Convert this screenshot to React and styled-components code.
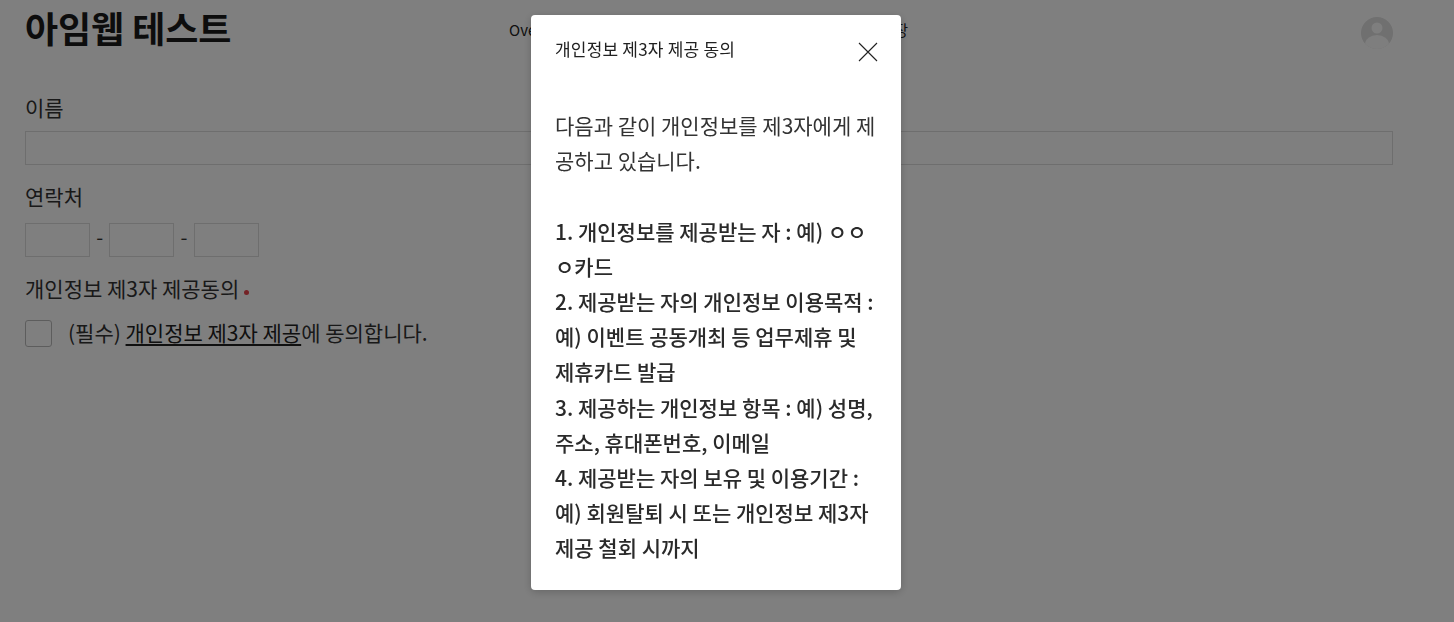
import React from "react"
import styled, { createGlobalStyle } from "styled-components"

const GlobalStyle = createGlobalStyle`
    html, body {
        margin: 0;
        padding: 0;
        height: 100%;
        background: #fff;
        overflow: hidden;
        font-family: "Noto Sans CJK KR", "Noto Sans", sans-serif;
        color: #212121;
    }
`

const Page = styled.div`
    padding: 0 61px 0 25px;
`

const Header = styled.header`
    height: 62px;
    display: grid;
    grid-template-columns: 484px 1fr 32px;
    align-items: start;
`

const Title = styled.h1`
    margin: 3px 0 0;
    font-size: 36px;
    line-height: 48px;
    font-weight: 700;
    letter-spacing: -0.1px;
    color: #1a1a1a;
`

const Nav = styled.nav`
    display: flex;
    justify-content: space-between;
    width: 399px;
    margin-top: 19px;
    font-size: 15px;
    line-height: 22px;
    color: #212121;
`

const Avatar = styled.div`
    width: 32px;
    height: 32px;
    margin-top: 17px;
`

const Form = styled.form`
    display: flex;
    flex-direction: column;
`

const Label = styled.label`
    display: block;
    font-size: 21px;
    line-height: 30px;
    color: #333;
    margin-top: ${(p) => p.$top}px;
    margin-bottom: ${(p) => p.$bottom}px;
`

const Required = styled.span`
    display: inline-block;
    width: 5px;
    height: 5px;
    margin-left: 5px;
    border-radius: 50%;
    background: #e8444c;
    vertical-align: 2px;
`

const NameInput = styled.input`
    box-sizing: border-box;
    display: block;
    width: 100%;
    height: 34px;
    padding: 0 8px;
    border: 1px solid #ddd;
    background: #fff;
`

const PhoneRow = styled.div`
    display: flex;
    align-items: center;
    height: 34px;
`

const PhoneInput = styled.input`
    box-sizing: border-box;
    width: 65px;
    height: 34px;
    padding: 0 8px;
    border: 1px solid #ddd;
    background: #fff;
`

const Dash = styled.span`
    width: 19.4px;
    margin-top: -8px;
    text-align: center;
    font-size: 20px;
    color: #333;
`

const AgreeRow = styled.div`
    display: flex;
    align-items: center;
    margin-top: 16px;
`

const Checkbox = styled.span`
    box-sizing: border-box;
    width: 27px;
    height: 27px;
    margin-right: 16px;
    border: 1px solid #bbb;
    border-radius: 3px;
    background: #fff;
`

const AgreeText = styled.span`
    margin-top: -3px;
    font-size: 21px;
    line-height: 30px;
    color: #333;
`

const AgreeLink = styled.a`
    color: #212121;
    text-decoration: underline;
    text-underline-offset: 3px;
`

const Overlay = styled.div`
    position: fixed;
    inset: 0;
    background: rgba(0, 0, 0, 0.5);
`

const Modal = styled.section`
    position: absolute;
    left: 531px;
    top: 15px;
    box-sizing: border-box;
    width: 370px;
    height: 575px;
    padding: 0 24px;
    background: #fff;
    border-radius: 4px;
    box-shadow: 0 2px 8px rgba(0, 0, 0, 0.2);
`

const ModalHeader = styled.div`
    display: flex;
    justify-content: space-between;
    align-items: flex-start;
    height: 93px;
    padding-top: 21px;
    box-sizing: border-box;
`

const ModalTitle = styled.h2`
    margin: 0;
    font-size: 17px;
    line-height: 26px;
    font-weight: 400;
    letter-spacing: 0.2px;
    color: #212121;
`

const CloseButton = styled.button`
    width: 20px;
    height: 20px;
    margin: 6px -1px 0 0;
    padding: 0;
    border: 0;
    background: none;
    color: #212121;
`

const ModalBody = styled.div`
    font-size: 21px;
    line-height: 35.2px;
    color: #333;
    word-break: break-all;
`

const Paragraph = styled.p`
    margin: 0 0 35.2px;
`

const Terms = styled.p`
    margin: 0;
    font-weight: 500;
    color: #2a2a2a;
`

function AvatarIcon() {
    return (
        <svg width="32" height="32" viewBox="0 0 32 32">
            <defs>
                <clipPath id="avatar-clip">
                    <circle cx="16" cy="16" r="16" />
                </clipPath>
            </defs>
            <g clipPath="url(#avatar-clip)">
                <rect width="32" height="32" fill="#e0e0e0" />
                <circle cx="16" cy="11" r="5.5" fill="#ffffff" opacity="0.9" />
                <ellipse cx="16" cy="27.5" rx="12" ry="9.5" fill="#ffffff" opacity="0.9" />
            </g>
        </svg>
    )
}

export default function App() {
    return (
        <>
            <GlobalStyle />
            <Page>
                <Header>
                    <Title>아임웹 테스트</Title>
                    <Nav>
                        <span>Overview</span>
                        <span>매장</span>
                    </Nav>
                    <Avatar><AvatarIcon /></Avatar>
                </Header>
                <Form>
                    <Label $top={30} $bottom={9}>이름</Label>
                    <NameInput />
                    <Label $top={16} $bottom={12}>연락처</Label>
                    <PhoneRow>
                        <PhoneInput />
                        <Dash>-</Dash>
                        <PhoneInput />
                        <Dash>-</Dash>
                        <PhoneInput />
                    </PhoneRow>
                    <Label $top={16} $bottom={1}>개인정보 제3자 제공동의<Required /></Label>
                    <AgreeRow>
                        <Checkbox />
                        <AgreeText>(필수) <AgreeLink>개인정보 제3자 제공</AgreeLink>에 동의합니다.</AgreeText>
                    </AgreeRow>
                </Form>
            </Page>
            <Overlay>
                <Modal>
                    <ModalHeader>
                        <ModalTitle>개인정보 제3자 제공 동의</ModalTitle>
                        <CloseButton aria-label="닫기">
                            <svg width="20" height="20" viewBox="0 0 20 20">
                                <path d="M1 1L19 19M19 1L1 19" stroke="currentColor" strokeWidth="1.1" fill="none" />
                            </svg>
                        </CloseButton>
                    </ModalHeader>
                    <ModalBody>
                        <Paragraph>다음과 같이 개인정보를 제3자에게 제공하고 있습니다.</Paragraph>
                        <Terms>
                            1. 개인정보를 제공받는 자 : 예) ㅇㅇㅇ카드<br />
                            2. 제공받는 자의 개인정보 이용목적 : 예) 이벤트 공동개최 등 업무제휴 및 제휴카드 발급<br />
                            3. 제공하는 개인정보 항목 : 예) 성명, 주소, 휴대폰번호, 이메일<br />
                            4. 제공받는 자의 보유 및 이용기간 : 예) 회원탈퇴 시 또는 개인정보 제3자 제공 철회 시까지
                        </Terms>
                    </ModalBody>
                </Modal>
            </Overlay>
        </>
    )
}
